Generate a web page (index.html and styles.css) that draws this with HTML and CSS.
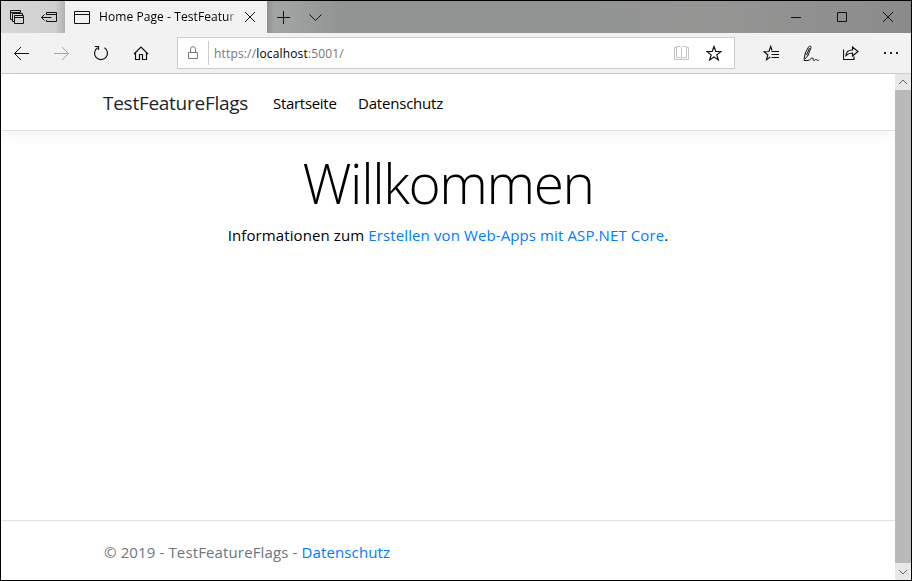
FILE: index.html
```html
<!DOCTYPE html>
<html lang="de">
<head>
<meta charset="utf-8">
<title>Home Page - TestFeatureFlags</title>
<link rel="stylesheet" href="styles.css">
</head>
<body>
<div class="window">
  <div class="titlebar">
    <div class="tab-tools">
      <svg class="icon-stack" width="15" height="15" viewBox="0 0 15 15"><path d="M2.500 9.500H.5V.5h10v2M.5 2.500h10M4.500 11.500h-2v-8h10v2M4.500 5.500h9v8h-9zM4.500 7.500h9"/></svg>
      <svg class="icon-aside" width="17" height="11" viewBox="0 0 17 11"><path d="M5.500 3V.5h10v9h-10V8M5.500 2.500h10M.5 5.500h10M3.500 2.500l-3 3 3 3"/></svg>
    </div>
    <div class="tab">
      <svg class="icon-page" width="16" height="13" viewBox="0 0 16 13"><path d="M.5.5h15v12H.5zM.5 3.500h15"/></svg>
      <span class="tab-title">Home Page - TestFeatur</span>
      <svg class="tab-close" width="10" height="10" viewBox="0 0 10 10"><path d="M0 0l10 10M10 0L0 10"/></svg>
    </div>
    <svg class="icon-plus" width="13" height="13" viewBox="0 0 13 13"><path d="M6.500 0v13M0 6.500h13"/></svg>
    <svg class="icon-chevron" width="13" height="7" viewBox="0 0 13 7"><path d="M.5.5l6 6 6-6"/></svg>
    <div class="window-buttons">
      <svg width="10" height="10" viewBox="0 0 10 10"><path d="M0 5.500h10"/></svg>
      <svg width="10" height="10" viewBox="0 0 10 10"><path d="M.5.5h9v9h-9z"/></svg>
      <svg width="10" height="10" viewBox="0 0 10 10"><path d="M0 0l10 10M10 0L0 10"/></svg>
    </div>
  </div>

  <div class="toolbar">
    <div class="nav-buttons">
      <svg width="16" height="16" viewBox="0 0 16 16"><path d="M1.500 8.500H16M8 2L1.500 8.500 8 15"/></svg>
      <svg class="disabled" width="16" height="16" viewBox="0 0 16 16"><path d="M1 8.500H15.500M9 2l6.500 6.500L9 15"/></svg>
      <svg width="16" height="16" viewBox="0 0 16 16"><path stroke-width="1.200" d="M4.500 2.700A6.500 6.500 0 1 0 11.500 2.700M1.800 1.500h3.700v3.500"/></svg>
      <svg width="16" height="16" viewBox="0 0 16 16"><path stroke-width="1.200" d="M1 9L8 2l7 7M2.500 8v6.500h4v-5h3v5h4V8"/></svg>
    </div>
    <div class="address">
      <svg class="icon-lock" width="10" height="14" viewBox="0 0 10 14"><path d="M.5 6.500h9v6h-9zM2.500 6V3.200a2.500 2.500 0 0 1 5 0V6"/></svg>
      <span class="address-divider"></span>
      <span class="url">https://<b>localhost</b>:5001/</span>
      <svg class="icon-book" width="15" height="14" viewBox="0 0 15 14"><path d="M2.500.5h4l1 1 1-1h4v11h-4l-1 1-1-1h-4zM7.500 1.500v11M2.500 1.500h-2v12h14v-12h-2"/></svg>
      <svg class="icon-star" width="16" height="16" viewBox="0 0 16 16"><path stroke-width="1.200" d="M8 1.500l1.800 5 5.200.1-4.200 3.300 1.600 5L8 12l-4.400 2.900 1.600-5L1 6.600l5.200-.1z"/></svg>
    </div>
    <div class="actions">
      <svg width="17" height="16" viewBox="0 0 17 16"><path stroke-width="1.200" d="M9 5.500L7.700 1.500 5.900 6.500l-5 .2 3.900 3.100-1.300 4.900 3.700-2.600"/><path d="M8.500 6.500H16M8.500 9.500H16M8.500 12.500H16"/></svg>
      <svg width="17" height="16" viewBox="0 0 17 16"><path d="M1 14.500L2.300 8 5.500 2C6.500.5 8.600 1 8 2.700L5 10.500l-3.500 4M2.300 8.500l2.500 2M6.500 3L4 9M.8 15.500H5c2.500-.5 3.500-3.200 4.700-2.500s-.3 2.500 1 2.500 1.300-1.200 2.300-1 .8 1.200 2.800.7"/></svg>
      <svg width="17" height="16" viewBox="0 0 17 16"><path stroke-width="1.200" d="M.5 4.500v10h10.500V11.500M3 10.500c.2-4 2.500-5.500 6.500-5.500V2l5.500 4.500L9.500 11V8C6.500 8 5 8.500 3 10.500z"/></svg>
      <svg width="16" height="16" viewBox="0 0 16 16"><path class="dots" d="M1 7h2v2H1zM7 7h2v2H7zM13 7h2v2h-2z"/></svg>
    </div>
  </div>

  <div class="viewport">
    <div class="page">
      <header class="navbar">
        <a class="brand">TestFeatureFlags</a>
        <a class="nav-start">Startseite</a>
        <a class="nav-privacy">Datenschutz</a>
      </header>
      <main>
        <h1>Willkommen</h1>
        <p>Informationen zum <a>Erstellen von Web-Apps mit ASP.NET Core</a>.</p>
      </main>
      <footer>© 2019 - TestFeatureFlags - <a>Datenschutz</a></footer>
    </div>
    <div class="scrollbar">
      <svg width="16" height="16" viewBox="0 0 16 16"><path d="M4 10l4-4 4 4"/></svg>
      <div class="thumb"></div>
      <svg width="16" height="17" viewBox="0 0 16 17"><path d="M4 7l4 4 4-4"/></svg>
    </div>
  </div>
</div>
</body>
</html>
```
FILE: styles.css
```css
* { box-sizing: border-box; }
body { margin: 0; font-family: "Open Sans", "Noto Sans", sans-serif; color: #000; }
svg { display: block; flex: none; fill: none; stroke: #111; }

.window { width: 912px; height: 581px; border: 1px solid #000; display: flex; flex-direction: column; background: #fff; overflow: hidden; }

.titlebar { height: 32px; flex: none; display: flex; align-items: center; background: linear-gradient(90deg, #8f8f8f 266px, #a3a5a4 274px, #a0a2a1 290px, #929493 340px, #929493 600px, #959594 720px, #8b8b8b 100%); }
.tab-tools { width: 64px; height: 32px; display: flex; align-items: center; padding-left: 9px; background: linear-gradient(90deg, #d6d6d6, #d0d0d0 54px, #b2b2b2); }
.icon-aside { margin-left: 16px; }
.tab { width: 202px; height: 32px; display: flex; align-items: center; padding-left: 9px; background: #f2f2f2; }
.tab-title { width: 137px; margin-left: 9px; white-space: nowrap; font-size: 12px; line-height: 20px; letter-spacing: .08px; -webkit-mask-image: linear-gradient(90deg, #000 128px, transparent 138px); mask-image: linear-gradient(90deg, #000 128px, transparent 138px); }
.tab-close { margin-left: 9px; }
.icon-plus { margin-left: 10px; }
.icon-chevron { margin-left: 19px; }
.window-buttons { margin-left: auto; margin-right: 18px; display: flex; gap: 36px; }

.toolbar { height: 41px; flex: none; display: flex; align-items: center; background: #f2f2f2; border-bottom: 1px solid #ccc; }
.nav-buttons { display: flex; gap: 24px; margin-left: 12px; }
.nav-buttons .disabled { stroke: #a5a5a5; }
.address { width: 558px; height: 32px; margin-left: 28px; display: flex; align-items: center; padding-left: 10px; background: #fff; border: 1px solid #ccc; }
.icon-lock { stroke: #777; }
.address-divider { width: 1px; height: 24px; margin: 0 5px 0 10px; background: #ccc; }
.url { font-size: 12px; letter-spacing: .16px; color: #777; }
.url b { font-weight: 400; color: #000; }
.icon-book { stroke: #c4c4c4; margin-left: auto; }
.icon-star { margin: 0 12px 0 17px; }
.actions { display: flex; gap: 23px; margin-left: 28px; }
.dots { fill: #222; stroke: none; }

.viewport { flex: 1; display: flex; min-height: 0; }
.page { width: 894px; display: flex; flex-direction: column; font-size: 15px; line-height: 24px; font-weight: 370; }
.page a { color: #007bff; }
.navbar { height: 57px; flex: none; display: flex; align-items: center; padding: 2px 0 0 102px; border-bottom: 1px solid #dee2e6; box-shadow: 0 4px 12px rgba(0, 0, 0, .05); }
.navbar .brand { width: 170px; font-size: 19px; line-height: 30px; letter-spacing: -.27px; color: #212529; }
.navbar .nav-start { width: 85px; letter-spacing: -.3px; color: #000; }
.navbar .nav-privacy { letter-spacing: -.2px; color: #000; }
main { flex: 1; padding-top: 18px; text-align: center; }
h1 { margin: 0 0 6px; font-size: 55px; line-height: 68px; font-weight: 300; letter-spacing: -1.4px; }
p { margin: 0; letter-spacing: .11px; }
footer { height: 60px; flex: none; padding: 19px 0 0 103px; border-top: 1px solid #dee2e6; letter-spacing: .13px; color: #6c757d; }

.scrollbar { width: 16px; display: flex; flex-direction: column; background: #e8e8e8; }
.scrollbar svg { stroke: #666; }
.thumb { flex: 1; background: #b9b9b9; }
```
